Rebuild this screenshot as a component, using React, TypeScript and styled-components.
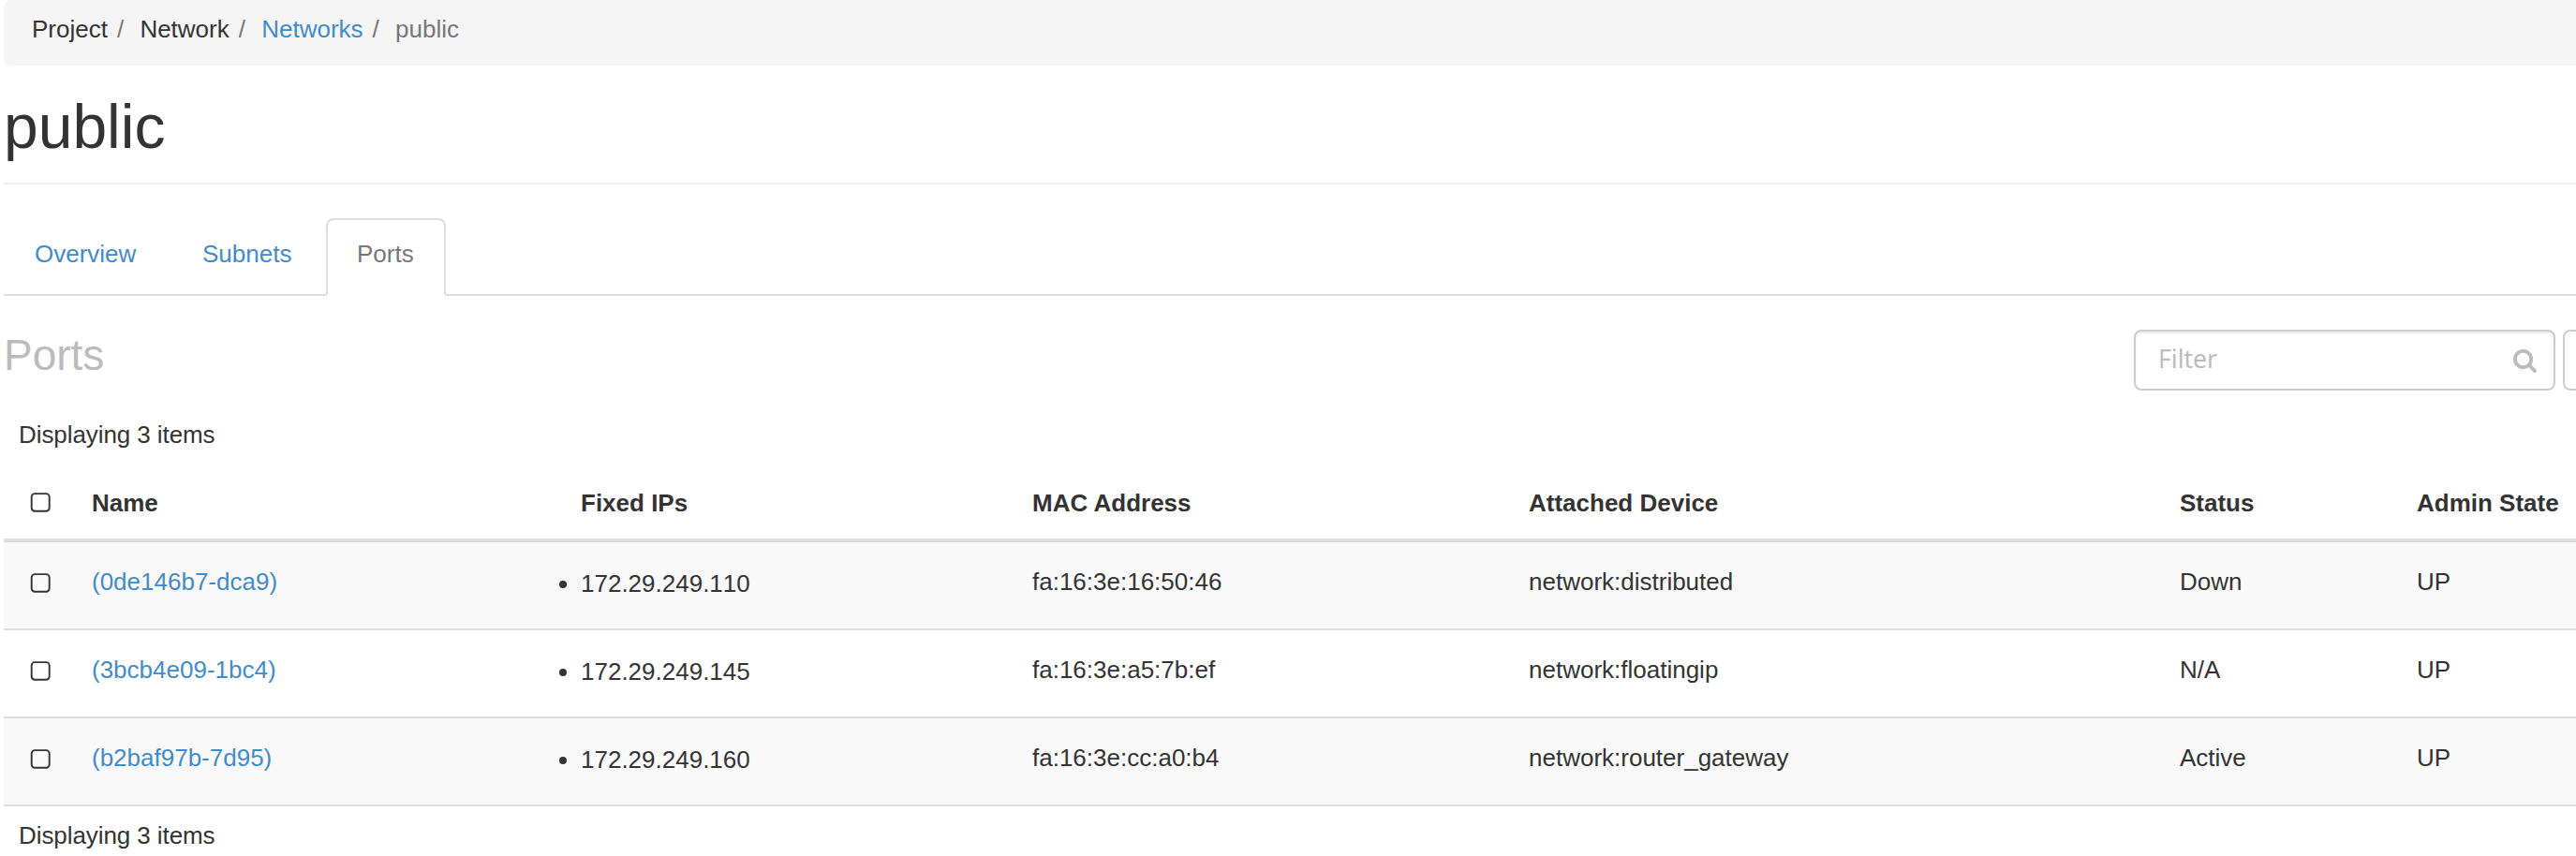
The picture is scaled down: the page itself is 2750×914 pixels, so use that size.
import React from "react";
import styled, { createGlobalStyle, css } from "styled-components";

const GlobalStyle = createGlobalStyle`
  *, *::before, *::after { box-sizing: border-box; }
  html, body { margin: 0; background: #fff; overflow: hidden; }
  body {
    font-family: "Liberation Sans", Arial, Helvetica, sans-serif;
    font-size: 26px;
    line-height: 37px;
    color: #333;
  }
`;

const Page = styled.main`
  height: 914px;
  padding-left: 4px;
  overflow: hidden;
`;

const Breadcrumb = styled.ol`
  display: flex;
  height: 70px;
  margin: 0;
  padding: 13px 30px 0;
  list-style: none;
  background: #f5f5f5;
  border-radius: 8px 0 0 8px;
`;

const Crumb = styled.li<{ $muted?: boolean }>`
  color: ${(p) => (p.$muted ? "#777" : "#333")};
  &:not(:first-child)::before {
    content: "/\\00a0";
    padding: 0 10px;
    color: #777;
  }
`;

const Link = styled.a`
  color: #428bca;
  text-decoration: none;
`;

const PageHeader = styled.header`
  height: 127px;
  padding-top: 29px;
  border-bottom: 2px solid #eee;
`;

const Title = styled.h1`
  margin: 0;
  font-size: 66px;
  font-weight: 400;
  line-height: 73px;
`;

const Tabs = styled.nav`
  display: flex;
  height: 83px;
  margin-top: 36px;
  border-bottom: 2px solid #ddd;
`;

const Tab = styled.a<{ $width: number; $active?: boolean }>`
  width: ${(p) => p.$width}px;
  height: 83px;
  padding: 18px 0 0 31px;
  border: 2px solid transparent;
  border-radius: 8px 8px 0 0;
  color: #428bca;
  text-decoration: none;
  ${(p) =>
    p.$active &&
    css`
      color: #777;
      background: #fff;
      border-color: #ddd;
      border-bottom-color: #fff;
    `}
`;

const Toolbar = styled.div`
  display: flex;
  justify-content: space-between;
  height: 101px;
  padding-top: 36px;
`;

const SectionTitle = styled.h3`
  margin: 0;
  padding-top: 2px;
  font-size: 46px;
  font-weight: 400;
  line-height: 51px;
  color: #bbb;
`;

const Actions = styled.div`
  display: flex;
  flex: none;
  gap: 8px;
  width: 472px;
  overflow: hidden;
`;

const FilterBox = styled.label`
  display: flex;
  flex: none;
  align-items: flex-start;
  justify-content: space-between;
  width: 450px;
  height: 65px;
  padding: 11px 18px 0 24px;
  border: 2px solid #ccc;
  border-radius: 8px;
  box-shadow: inset 0 2px 2px rgba(0, 0, 0, 0.075);
`;

const FilterInput = styled.input`
  width: 340px;
  height: 36px;
  padding: 0;
  border: 0;
  outline: 0;
  background: transparent;
  font: 26.6px "Noto Sans", sans-serif;
  color: #555;
  &::placeholder {
    color: #bbb;
    opacity: 1;
  }
`;

const SearchGlyph = styled.svg`
  width: 25px;
  height: 25px;
  margin-top: 8px;
  fill: #bbb;
`;

const ActionButton = styled.button`
  flex: none;
  width: 180px;
  height: 65px;
  border: 2px solid #ccc;
  border-radius: 8px;
  background: #fff;
`;

const Count = styled.div<{ $footer?: boolean }>`
  height: ${(p) => (p.$footer ? 53 : 65)}px;
  padding: ${(p) => (p.$footer ? 13 : 29)}px 16px 0;
  letter-spacing: -0.08px;
`;

const Table = styled.table`
  width: 2746px;
  table-layout: fixed;
  border-collapse: separate;
  border-spacing: 0;
`;

const Col = styled.col<{ $width: number }>`
  width: ${(p) => p.$width}px;
`;

const HeadCell = styled.th`
  height: 97px;
  padding: 37px 0 0 16px;
  border-bottom: 4px solid #ddd;
  text-align: left;
  vertical-align: top;
  white-space: nowrap;
`;

const Row = styled.tr`
  &:nth-child(odd) {
    background: #f9f9f9;
  }
`;

const Cell = styled.td`
  height: 94px;
  padding: 24px 0 0 16px;
  border-bottom: 2px solid #ddd;
  vertical-align: top;
  white-space: nowrap;
`;

const IpList = styled.ul`
  margin: 2px 0 0;
  padding: 0;
  list-style: disc;
  font-kerning: none;
`;

const Box = styled.svg<{ $head?: boolean }>`
  display: block;
  width: 22px;
  height: 22px;
  margin: ${(p) => (p.$head ? 7 : 9)}px 0 0 12px;
`;

const Checkbox = ({ head }: { head?: boolean }) => (
  <Box $head={head} viewBox="0 0 22 22" fill="none" stroke="#333" strokeWidth="1.9">
    <rect x="1.7" y="1.1" width="19" height="18.6" rx="3.4" />
  </Box>
);

const SearchIcon = () => (
  <SearchGlyph viewBox="0 128 1664 1664">
    <path d="M1152 832q0-185-131.5-316.5t-316.5-131.5-316.5 131.5-131.5 316.5 131.5 316.5 316.5 131.5 316.5-131.5 131.5-316.5zm512 832q0 52-38 90t-90 38q-54 0-90-38l-343-342q-179 124-399 124-143 0-273.5-55.5t-225-150-150-225-55.5-273.5 55.5-273.5 150-225 225-150 273.5-55.5 273.5 55.5 225 150 150 225 55.5 273.5q0 220-124 399l343 343q37 37 37 90z" />
  </SearchGlyph>
);

const columnWidths = [78, 522, 482, 530, 695, 253, 186];
const headings = ["Name", "Fixed IPs", "MAC Address", "Attached Device", "Status", "Admin State"];

const ports = [
  { name: "(0de146b7-dca9)", ip: "172.29.249.110", mac: "fa:16:3e:16:50:46", device: "network:distributed", status: "Down", admin: "UP" },
  { name: "(3bcb4e09-1bc4)", ip: "172.29.249.145", mac: "fa:16:3e:a5:7b:ef", device: "network:floatingip", status: "N/A", admin: "UP" },
  { name: "(b2baf97b-7d95)", ip: "172.29.249.160", mac: "fa:16:3e:cc:a0:b4", device: "network:router_gateway", status: "Active", admin: "UP" },
];

export default function App() {
  return (
    <Page>
      <GlobalStyle />
      <Breadcrumb>
        <Crumb>Project</Crumb>
        <Crumb>Network</Crumb>
        <Crumb>
          <Link>Networks</Link>
        </Crumb>
        <Crumb $muted>public</Crumb>
      </Breadcrumb>
      <PageHeader>
        <Title>public</Title>
      </PageHeader>
      <Tabs>
        <Tab $width={179}>Overview</Tab>
        <Tab $width={165}>Subnets</Tab>
        <Tab $width={128} $active>
          Ports
        </Tab>
      </Tabs>
      <Toolbar>
        <SectionTitle>Ports</SectionTitle>
        <Actions>
          <FilterBox>
            <FilterInput placeholder="Filter" />
            <SearchIcon />
          </FilterBox>
          <ActionButton />
        </Actions>
      </Toolbar>
      <Count>Displaying 3 items</Count>
      <Table>
        <colgroup>
          {columnWidths.map((w, i) => (
            <Col key={i} $width={w} />
          ))}
        </colgroup>
        <thead>
          <tr>
            <HeadCell>
              <Checkbox head />
            </HeadCell>
            {headings.map((h) => (
              <HeadCell key={h}>{h}</HeadCell>
            ))}
          </tr>
        </thead>
        <tbody>
          {ports.map((p) => (
            <Row key={p.name}>
              <Cell>
                <Checkbox />
              </Cell>
              <Cell>
                <Link>{p.name}</Link>
              </Cell>
              <Cell>
                <IpList>
                  <li>{p.ip}</li>
                </IpList>
              </Cell>
              <Cell>{p.mac}</Cell>
              <Cell>{p.device}</Cell>
              <Cell>{p.status}</Cell>
              <Cell>{p.admin}</Cell>
            </Row>
          ))}
        </tbody>
      </Table>
      <Count $footer>Displaying 3 items</Count>
    </Page>
  );
}
